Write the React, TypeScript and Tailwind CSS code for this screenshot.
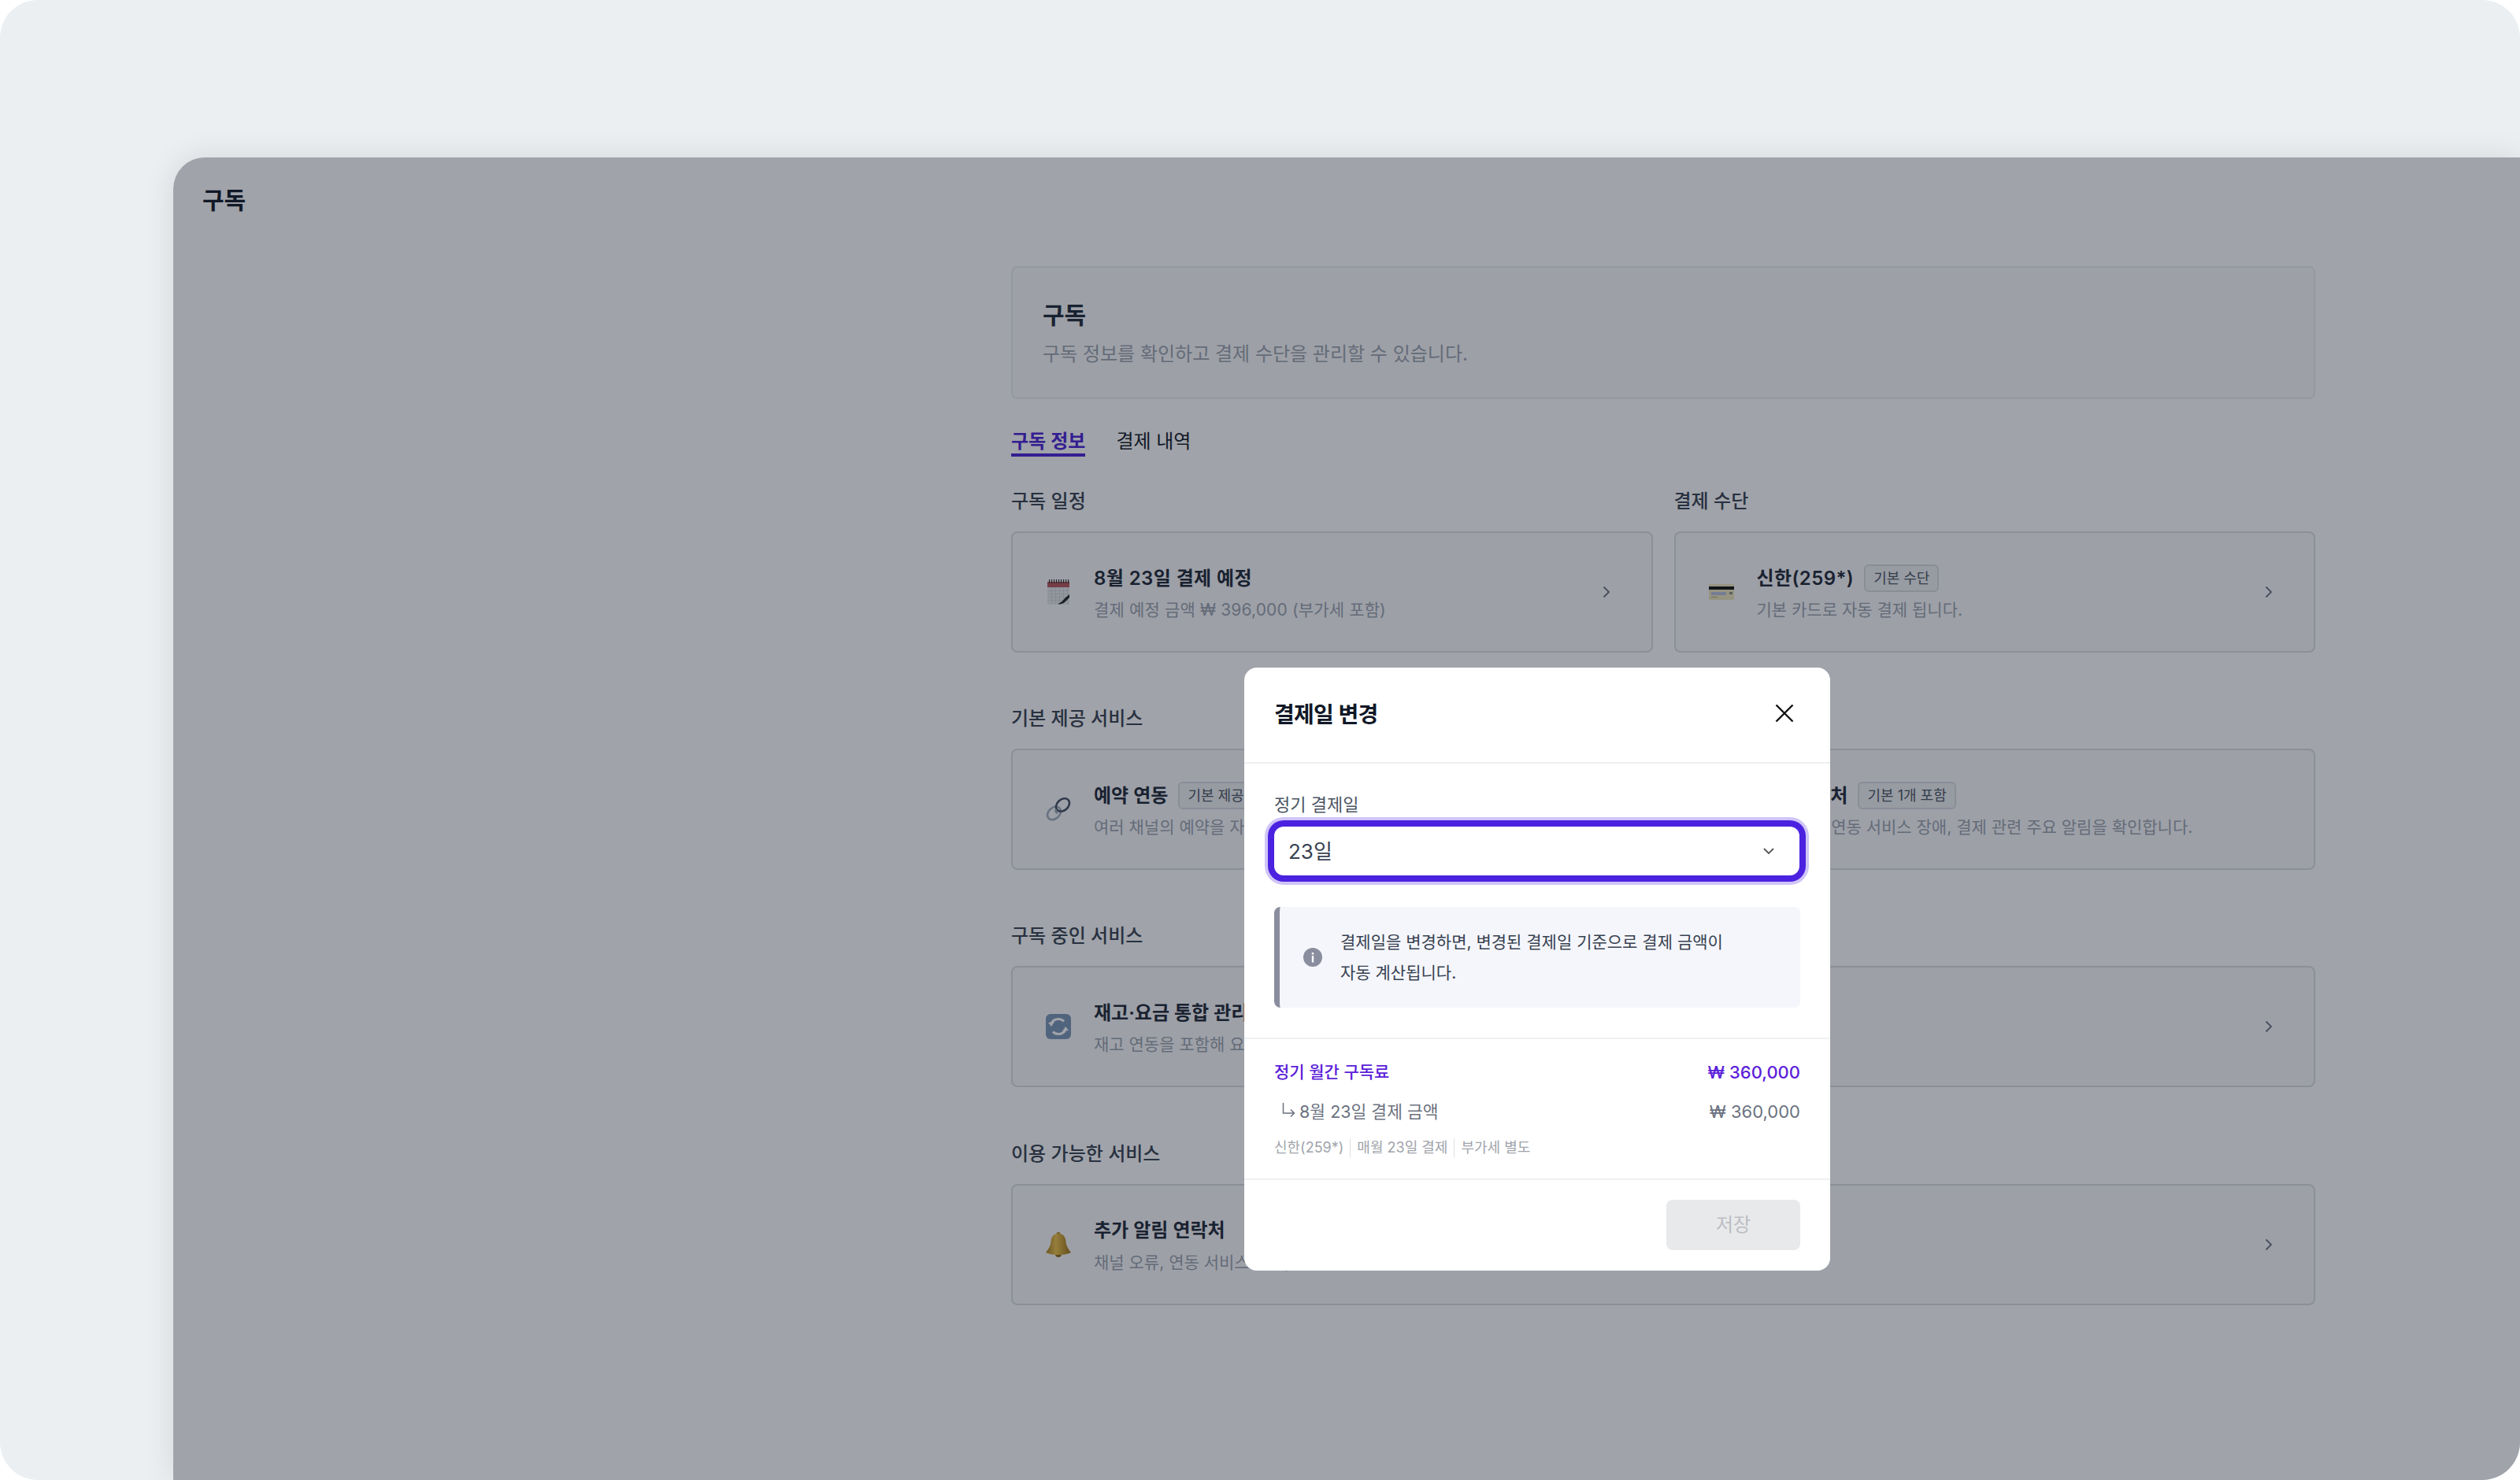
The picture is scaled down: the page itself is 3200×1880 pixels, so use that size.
import React from "react";

const Chevron = () => (
  <svg width="10" height="16" viewBox="0 0 10 16" fill="none" className="shrink-0">
    <path d="M1.500 1.500 8 8l-6.500 6.500" stroke="#6b7280" strokeWidth="1.800" />
  </svg>
);

const CalendarIcon = () => (
  <svg width="32" height="32" viewBox="0 0 32 32">
    <rect x="2" y="3" width="28" height="29" fill="#e8e9eb" />
    <rect x="2" y="3" width="28" height="7" fill="#b9555c" />
    {[4, 7, 10, 13, 16, 19, 22, 25, 28].map((x) => (
      <rect key={x} x={x} y="0" width="1.200" height="5" fill="#333" />
    ))}
    {[14, 18, 22, 26].map((y) => (
      <rect key={y} x="2" y={y} width="28" height="1" fill="#d6d8dc" />
    ))}
    {[7, 12, 17, 22, 27].map((x) => (
      <rect key={x} x={x} y="10" width="1" height="22" fill="#d6d8dc" />
    ))}
    <path d="M15 31c4-1 7-4 9-7l6-5v4l-6 6c-3 2-6 3-9 2z" fill="#222" />
  </svg>
);

const CardIcon = () => (
  <svg width="32" height="32" viewBox="0 0 32 32">
    <rect x="0" y="6" width="32" height="20" rx="1" fill="#efe7bd" />
    <rect x="0" y="9" width="32" height="4" fill="#111" />
    <rect x="3" y="16" width="19" height="4" fill="#b8c0dc" />
    <rect x="26" y="16" width="4" height="3" fill="#8b8f80" />
    <rect x="3" y="22" width="8" height="1" fill="#b2ab7d" />
  </svg>
);

const LinkIcon = () => (
  <svg width="32" height="32" viewBox="0 0 32 32" fill="none">
    <ellipse cx="10.500" cy="21" rx="9.500" ry="7" transform="rotate(-42 10.500 21)" stroke="#a3adbd" strokeWidth="2.600" />
    <ellipse cx="21.500" cy="10.500" rx="9.500" ry="7" transform="rotate(-42 21.500 10.500)" stroke="#465063" strokeWidth="2.600" />
    <path d="M15 21c-2-1-3-3-2-5" stroke="#a3adbd" strokeWidth="2.600" />
  </svg>
);

const RefreshIcon = () => (
  <svg width="32" height="32" viewBox="0 0 32 32" fill="none">
    <rect x="0" y="0" width="32" height="32" rx="6" fill="#7a96b8" />
    <path d="M7 12c2-4 5-5.500 9-5.500 3 0 5.500 1.200 7 3" stroke="#fff" strokeWidth="3" />
    <path d="M25 20c-2 4-5 5.500-9 5.500-3 0-5.500-1.200-7-3" stroke="#fff" strokeWidth="3" />
    <path d="m3 11 8-1-4 6z" fill="#fff" />
    <path d="m29 21-8 1 4-6z" fill="#fff" />
  </svg>
);

const BellIcon = () => (
  <svg width="32" height="32" viewBox="0 0 32 32">
    <defs>
      <linearGradient id="bell" x1="0" x2="1" y1="0" y2="0">
        <stop offset="0" stopColor="#a8801c" />
        <stop offset="0.4" stopColor="#eec14a" />
        <stop offset="1" stopColor="#9a7112" />
      </linearGradient>
    </defs>
    <circle cx="16" cy="2.500" r="2.500" fill="#b58c24" />
    <circle cx="16" cy="28" r="4" fill="#8e6a15" />
    <path d="M16 2c6 0 9 4 9.500 10 .4 5 2 8 6.500 14-5 2.500-11 3-16 3s-11-.5-16-3c4.500-6 6.100-9 6.500-14C7 6 10 2 16 2z" fill="url(#bell)" />
  </svg>
);

const Badge = ({ children }: { children: React.ReactNode }) => (
  <span className="flex h-[35px] items-center rounded-[6px] border-2 border-[#d9dbdf] bg-[#f1f2f4] px-[10px] text-[18px] text-[#4b5563]">
    {children}
  </span>
);

const Item = ({
  icon,
  title,
  badge,
  sub,
  spaced,
}: {
  icon?: React.ReactNode;
  title?: string;
  badge?: string;
  sub?: React.ReactNode;
  spaced?: boolean;
}) => (
  <div className="flex min-w-0 flex-1 items-center">
    <div className="flex w-[32px] shrink-0 items-center justify-center">{icon}</div>
    <div className="ml-[29px] mt-[4px] flex min-w-0 flex-1 flex-col">
      <div className="flex h-[35px] items-center gap-[13px]">
        <span
          className={
            spaced
              ? "text-[24px] font-semibold leading-[34px] tracking-[0.4px] text-[#1f2937]"
              : "text-[24px] font-semibold leading-[34px] text-[#1f2937]"
          }
        >
          {title}
        </span>
        {badge && <Badge>{badge}</Badge>}
      </div>
      <span className="mt-[7px] whitespace-nowrap text-[21px] leading-[32px] text-[#9ca3af]">{sub}</span>
    </div>
  </div>
);

const CardShell = ({ children, chevron = true }: { children: React.ReactNode; chevron?: boolean }) => (
  <div className="flex h-[154px] items-center rounded-[8px] border-2 border-[#dcdee1] bg-[#fbfbfc] pl-[42px] pr-[52px]">
    {children}
    {chevron && <Chevron />}
  </div>
);

const SectionTitle = ({ children }: { children?: React.ReactNode }) => (
  <h3 className="mb-[21px] h-[36px] text-[24px] font-medium leading-[38px] text-[#374151]">{children}</h3>
);

export default function App() {
  return (
    <div className="h-[1880px] w-[3200px] overflow-hidden bg-white font-['Inter','Noto_Sans_CJK_KR',sans-serif]">
      <div className="h-full overflow-hidden rounded-[48px] bg-[#ebeff2] pl-[220px] pt-[200px]">
        <div className="relative h-full rounded-tl-[40px] bg-white shadow-[0_0_40px_rgba(0,0,0,0.1)]">
          <div className="h-[138px] pl-[37px] pt-[36px] text-[30px] font-semibold leading-[36px] text-[#111827]">구독</div>

          <main className="pl-[1064px] pr-[260px]">
            <section className="flex h-[169px] flex-col justify-center rounded-[8px] border-2 border-[#eceef0] bg-[#fafafb] pl-[38px] pt-[2px]">
              <h1 className="text-[30px] font-semibold leading-[40px] text-[#1f2937]">구독</h1>
              <p className="mt-[12px] text-[24px] leading-[36px] text-[#9ca3af]">
                구독 정보를 확인하고 결제 수단을 관리할 수 있습니다.
              </p>
            </section>

            <nav className="mt-[39px] flex gap-[39px] text-[24px] leading-[30px]">
              <span className="border-b-4 border-[#4c22d8] font-semibold text-[#4c22d8]">구독 정보</span>
              <span className="text-[#111827]">결제 내역</span>
            </nav>

            <div className="mt-[38px] grid grid-cols-2 gap-x-[27px] gap-y-[65.200px]">
              <div>
                <SectionTitle>구독 일정</SectionTitle>
                <CardShell>
                  <Item
                    spaced
                    icon={<CalendarIcon />}
                    title="8월 23일 결제 예정"
                    sub={<span className="tracking-[0.15px]">결제 예정 금액 ₩ 396,000 (부가세 포함)</span>}
                  />
                </CardShell>
              </div>
              <div>
                <SectionTitle>결제 수단</SectionTitle>
                <CardShell>
                  <Item spaced icon={<CardIcon />} title="신한(259*)" badge="기본 수단" sub="기본 카드로 자동 결제 됩니다." />
                </CardShell>
              </div>
              <div className="col-span-2">
                <SectionTitle>기본 제공 서비스</SectionTitle>
                <CardShell chevron={false}>
                  <div className="grid w-full grid-cols-[841px_1fr]">
                    <Item icon={<LinkIcon />} title="예약 연동" badge="기본 제공" sub="여러 채널의 예약을 자동으로 연동합니다." />
                    <Item icon={<BellIcon />} title="알림 연락처" badge="기본 1개 포함" sub="채널 오류, 연동 서비스 장애, 결제 관련 주요 알림을 확인합니다." />
                  </div>
                </CardShell>
              </div>
              <div className="col-span-2">
                <SectionTitle>구독 중인 서비스</SectionTitle>
                <CardShell>
                  <Item icon={<RefreshIcon />} title="재고·요금 통합 관리" sub="재고 연동을 포함해 요금을 통합 관리합니다." />
                </CardShell>
              </div>
              <div className="col-span-2">
                <SectionTitle>이용 가능한 서비스</SectionTitle>
                <CardShell>
                  <Item icon={<BellIcon />} title="추가 알림 연락처" sub="채널 오류, 연동 서비스 장애, 결제 관련 주요 알림을 확인합니다." />
                </CardShell>
              </div>
            </div>
          </main>

          <div className="absolute inset-0 rounded-tl-[40px] bg-[#111827]/40" />

          <div className="absolute left-[1360px] top-[648px] w-[744px] overflow-hidden rounded-[16px] bg-white">
            <header className="flex h-[122px] items-center justify-between border-b-2 border-[#eef0f2] pl-[38px] pr-[46px]">
              <h2 className="text-[28px] font-semibold tracking-[-0.7px] text-[#111827]">결제일 변경</h2>
              <svg width="24" height="24" viewBox="0 0 24 24" fill="none" className="mb-[4px]">
                <path d="M1.500 1.500l21 21M22.500 1.500l-21 21" stroke="#111" strokeWidth="2.400" />
              </svg>
            </header>

            <div className="px-[38px] pb-[38px] pt-[37px]">
              <label className="block text-[22px] leading-[30px] text-[#4b5563]">정기 결제일</label>
              <div className="mr-[1px] mt-[13px] flex h-[62px] items-center justify-between rounded-[12px] bg-white pl-[18px] pr-[32px] text-[26px] text-[#374151] shadow-[0_0_0_8px_#4b22e0,0_0_0_12px_#cfc5f7]">
                <span>23일</span>
                <svg width="14" height="9" viewBox="0 0 14 9" fill="none">
                  <path d="M1 1l6 6 6-6" stroke="#555" strokeWidth="1.800" />
                </svg>
              </div>

              <div className="mt-[40px] flex h-[128px] items-center overflow-hidden rounded-[8px] border-l-[7px] border-[#8a8d9e] bg-[#f5f6fb] pl-[30px]">
                <svg width="24" height="24" viewBox="0 0 24 24" className="shrink-0">
                  <circle cx="12" cy="12" r="12" fill="#8a8d9e" />
                  <rect x="10.800" y="10" width="2.400" height="8.500" fill="#fff" />
                  <rect x="10.800" y="6" width="2.400" height="2.500" fill="#fff" />
                </svg>
                <p className="ml-[23px] text-[21px] leading-[39px] text-[#374151]">
                  결제일을 변경하면, 변경된 결제일 기준으로 결제 금액이
                  <br />
                  자동 계산됩니다.
                </p>
              </div>
            </div>

            <div className="border-t-2 border-[#eef0f2] px-[38px] pb-[26px] pt-[27px]">
              <div className="flex items-center justify-between leading-[30px] text-[#5b21d9]">
                <span className="text-[21px] font-medium">정기 월간 구독료</span>
                <span className="text-[22px] font-medium">₩ 360,000</span>
              </div>
              <div className="mt-[20px] flex items-center justify-between leading-[30px] text-[#6b7280]">
                <span className="flex items-center text-[21.500px]">
                  <svg width="18" height="20" viewBox="0 0 18 20" fill="none" className="mb-[4px] ml-[10px] mr-[4px]">
                    <path d="M1.500 1v13H15M11 9.500l4.500 4.500L11 18.500" stroke="#6b7280" strokeWidth="1.500" />
                  </svg>
                  8월 23일 결제 금액
                </span>
                <span className="text-[22px]">₩ 360,000</span>
              </div>
              <div className="mt-[18px] flex items-center text-[18px] leading-[26px] text-[#a0a4ab]">
                <span>신한(259*)</span>
                <span className="mx-[8px] h-[24px] w-px bg-[#dcdee1]" />
                <span>매월 23일 결제</span>
                <span className="mx-[8px] h-[24px] w-px bg-[#dcdee1]" />
                <span>부가세 별도</span>
              </div>
            </div>

            <footer className="flex justify-end border-t-2 border-[#eef0f2] px-[38px] pb-[26px] pt-[25px]">
              <button className="h-[64px] w-[170px] rounded-[8px] bg-[#e8e9eb] text-[24px] text-[#bcbec3]">저장</button>
            </footer>
          </div>
        </div>
      </div>
    </div>
  );
}
